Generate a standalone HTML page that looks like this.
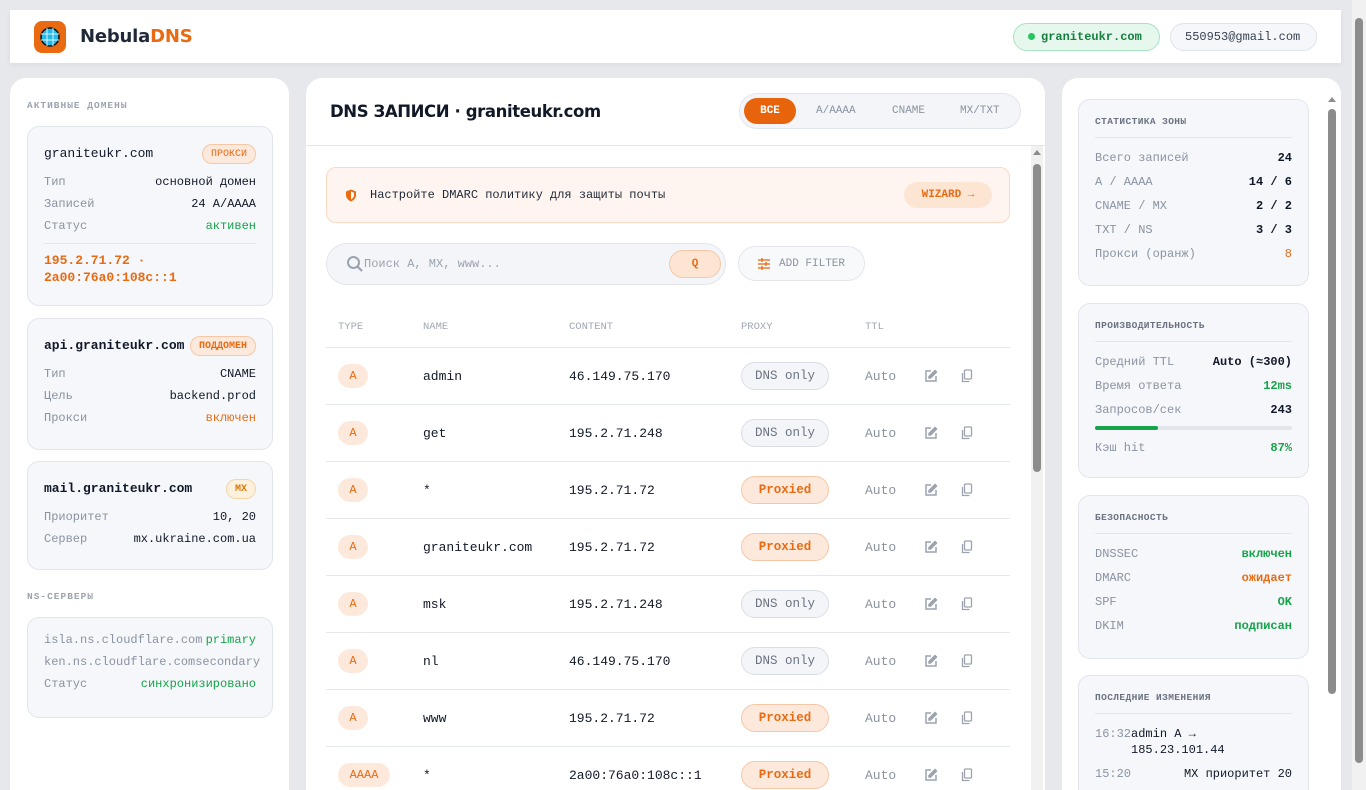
<!DOCTYPE html>
<html><head><meta charset="utf-8">
<style>
*{box-sizing:border-box;margin:0;padding:0}
html,body{width:1366px;height:790px;overflow:hidden}
body{background:#e6e8ec;font-family:"Liberation Mono","DejaVu Sans Mono",monospace;color:#111827;position:relative}
.sans{font-family:"DejaVu Sans","Liberation Sans",sans-serif}
.hdr{position:absolute;left:10px;top:10px;width:1331px;height:53px;background:#fff;box-shadow:0 2px 6px rgba(0,0,0,.05)}
.logo{position:absolute;left:24px;top:11px;width:32px;height:32px;border-radius:8px;background:#ea6a12}
.brand{position:absolute;left:70px;top:16px;font:bold 18px "DejaVu Sans",sans-serif;letter-spacing:-.2px;color:#1f2937}
.brand span{color:#ea6a12}
.pill{position:absolute;top:13px;height:28px;border-radius:14px;font-size:12px;line-height:26px;padding:0 14px;white-space:nowrap}
.pscroll{position:absolute;right:0;top:0;width:14px;height:790px;background:#f1f1f1}
.panel{position:absolute;background:#fff;border-radius:16px;overflow:hidden}
.lab{font-size:9.5px;font-weight:bold;letter-spacing:1px;color:#9ca3af}
.card{background:#f5f7fa;border:1px solid #e2e6ec;border-radius:12px;position:absolute;left:17px;width:246px;padding:0 16px}
.row{display:flex;justify-content:space-between;font-size:12px;height:22px;line-height:22px}
.row .k{color:#8b93a1}
.g{color:#16a34a}.o{color:#ea6a12}
.badge{font-size:10px;border-radius:10px;padding:0 8px;height:20px;line-height:20px;border:1px solid #f6c7a6;background:#fde9dc;color:#ea6a12}
.rr{position:absolute;left:20px;width:684px;height:57px;border-top:1px solid #e5e8ee;font-size:13px}
.rr div{position:absolute;top:0;line-height:58px}
.tb{top:16px!important;line-height:24px!important;height:24px;border-radius:12px;background:#fde9dc;color:#ea6a12;font-size:12px;text-align:center;padding:0 8px}
.px{top:14px!important;line-height:26px!important;height:28px;border-radius:14px;font-size:12.5px;width:88px;text-align:center;border:1px solid #d9dee6;background:#f3f5f8;color:#6b7280}
.px.p{background:#fde9dc;border-color:#f6c7a6;color:#ea6a12;font-weight:bold}
.sc{position:absolute;width:12px;background:#f1f1f1}
.th{position:absolute;left:2px;width:8px;border-radius:4px;background:#8c8c8c}
.rc{position:absolute;left:16px;width:231px;background:#f5f7fa;border:1px solid #e2e6ec;border-radius:12px;padding:0 16px}
.rc .lab{font-size:9.5px;height:38px;line-height:44px;border-bottom:1px solid #e2e6ec;margin-bottom:8px;letter-spacing:.4px;color:#6b7280}
.rc .row{height:24px;line-height:24px}
.rc .row b{color:#111827}
</style></head><body>
<div class="hdr">
 <div class="logo"><svg width="32" height="32" viewBox="0 0 32 32"><circle cx="16" cy="16" r="9" fill="#22b8e8" stroke="#111" stroke-width="1.5"/><g stroke="#dff6ff" stroke-width="1" fill="none"><line x1="7" y1="13" x2="25" y2="13"/><line x1="7" y1="19" x2="25" y2="19"/><line x1="13" y1="7" x2="13" y2="25"/><line x1="19" y1="7" x2="19" y2="25"/></g></svg></div>
 <div class="brand">Nebula<span>DNS</span></div>
 <div class="pill" style="left:1003px;width:147px;background:#e6f7ee;border:1px solid #a7e3c0;color:#15803d;font-weight:bold"><span style="display:inline-block;width:7px;height:7px;border-radius:50%;background:#22c55e;margin-right:6px"></span>graniteukr.com</div>
 <div class="pill" style="left:1160px;width:147px;background:#f5f7fa;border:1px solid #dfe3ea;color:#374151">550953@gmail.com</div>
</div>
<div class="pscroll"><div style="position:absolute;left:3px;top:18px;width:8px;height:745px;border-radius:4px;background:#8c8c8c"></div></div>

<div class="panel" style="left:10px;top:78px;width:279px;height:730px">
 <div class="lab" style="position:absolute;left:17px;top:22px">АКТИВНЫЕ ДОМЕНЫ</div>
 <div class="card" style="top:48px;height:180px">
  <div class="row" style="height:54px;line-height:54px;font-size:13px;align-items:center"><span>graniteukr.com</span><span class="badge">ПРОКСИ</span></div>
  <div class="row" style="margin-top:-10px"><span class="k">Тип</span><span>основной домен</span></div>
  <div class="row"><span class="k">Записей</span><span>24 A/AAAA</span></div>
  <div class="row"><span class="k">Статус</span><span class="g">активен</span></div>
  <div style="border-top:1px solid #e2e6ec;margin-top:6px;padding-top:8px;color:#ea6a12;font-size:13px;font-weight:bold;line-height:17px">195.2.71.72 ·<br>2a00:76a0:108c::1</div>
 </div>
 <div class="card" style="top:240px;height:132px">
  <div class="row" style="height:54px;line-height:54px;font-size:13px;align-items:center;font-weight:bold"><span>api.graniteukr.com</span><span class="badge">ПОДДОМЕН</span></div>
  <div class="row" style="margin-top:-10px"><span class="k">Тип</span><span>CNAME</span></div>
  <div class="row"><span class="k">Цель</span><span>backend.prod</span></div>
  <div class="row"><span class="k">Прокси</span><span class="o">включен</span></div>
 </div>
 <div class="card" style="top:383px;height:109px">
  <div class="row" style="height:54px;line-height:54px;font-size:13px;align-items:center;font-weight:bold"><span>mail.graniteukr.com</span><span class="badge" style="background:#fdf0dc;border-color:#f3d6a8;color:#d97706">MX</span></div>
  <div class="row" style="margin-top:-10px"><span class="k">Приоритет</span><span>10, 20</span></div>
  <div class="row"><span class="k">Сервер</span><span>mx.ukraine.com.ua</span></div>
 </div>
 <div class="lab" style="position:absolute;left:17px;top:513px">NS-СЕРВЕРЫ</div>
 <div class="card" style="top:539px;height:101px;padding-top:11px">
  <div class="row" style="white-space:nowrap"><span class="k">isla.ns.cloudflare.com</span><span class="g">primary</span></div>
  <div class="row" style="white-space:nowrap;width:250px"><span class="k">ken.ns.cloudflare.comsecondary</span></div>
  <div class="row"><span class="k">Статус</span><span class="g">синхронизировано</span></div>
 </div>
</div>

<div class="panel" style="left:306px;top:78px;width:739px;height:730px">
 <div class="sans" style="position:absolute;left:24px;top:24px;font-size:16.5px;font-weight:bold;letter-spacing:-.4px">DNS ЗАПИСИ · graniteukr.com</div>
 <div style="position:absolute;left:433px;top:15px;width:282px;height:36px;border-radius:18px;background:#f3f5f8;border:1px solid #e2e6ec;font-size:11px;color:#8b93a1">
  <div style="position:absolute;left:4px;top:4px;width:52px;height:26px;border-radius:13px;background:#e8640c;color:#fff;text-align:center;line-height:26px;font-weight:bold">ВСЕ</div>
  <div style="position:absolute;left:76px;top:11px">A/AAAA</div>
  <div style="position:absolute;left:152px;top:11px">CNAME</div>
  <div style="position:absolute;left:220px;top:11px">MX/TXT</div>
 </div>
 <div style="position:absolute;left:0;top:67px;width:739px;border-top:1px solid #e2e6ec"></div>
 <div class="sc" style="left:725px;top:68px;height:662px"><div class="th" style="top:18px;height:308px"></div><div style="position:absolute;left:2px;top:4px;border:4px solid transparent;border-bottom:5px solid #8c8c8c;border-top:0"></div></div>
 <div style="position:absolute;left:20px;top:89px;width:684px;height:56px;border-radius:10px;background:#fff5f0;border:1px solid #fbd9c2">
  <svg style="position:absolute;left:18px;top:21px" width="12" height="13" viewBox="0 0 12 13"><path d="M6 .5 11 2.5V6c0 3-2.2 5.3-5 6.5C3.2 11.3 1 9 1 6V2.5Z" fill="#ea6a12"/><path d="M6 2.5 9 3.8V6c0 2-1.3 3.6-3 4.4Z" fill="#fff"/></svg>
  <div style="position:absolute;left:43px;top:20px;font-size:12px;color:#1f2937">Настройте DMARC политику для защиты почты</div>
  <div style="position:absolute;left:577px;top:14px;width:88px;height:26px;border-radius:13px;background:#fde5d4;color:#ea6a12;font-size:11px;font-weight:bold;text-align:center;line-height:26px">WIZARD →</div>
 </div>
 <div style="position:absolute;left:20px;top:165px;width:400px;height:42px;border-radius:21px;background:#f3f5f8;border:1px solid #e2e6ec">
  <svg style="position:absolute;left:19px;top:11px" width="18" height="18" viewBox="0 0 18 18"><circle cx="7.5" cy="7.5" r="5.5" fill="none" stroke="#9ca3af" stroke-width="2"/><line x1="11.5" y1="11.5" x2="16" y2="16" stroke="#9ca3af" stroke-width="2.2"/></svg>
  <div style="position:absolute;left:37px;top:13px;font-size:12px;color:#9ca3af">Поиск A, MX, www...</div>
  <div style="position:absolute;left:342px;top:6px;width:52px;height:28px;border-radius:14px;background:#fde5d4;border:1px solid #f6c7a6;color:#ea6a12;font-size:11px;font-weight:bold;text-align:center;line-height:26px">Q</div>
 </div>
 <div style="position:absolute;left:432px;top:168px;width:127px;height:35px;border-radius:18px;border:1px solid #e2e6ec;background:#f8f9fb;font-size:11px;color:#8b93a1;line-height:35px;padding-left:40px">ADD FILTER
  <svg style="position:absolute;left:19px;top:11px" width="12" height="12" viewBox="0 0 12 12" stroke="#ea6a12" stroke-width="1.3"><line x1="0" y1="2" x2="12" y2="2"/><line x1="0" y1="6" x2="12" y2="6"/><line x1="0" y1="10" x2="12" y2="10"/><line x1="4" y1="0" x2="4" y2="4"/><line x1="8" y1="4" x2="8" y2="8"/><line x1="4" y1="8" x2="4" y2="12"/></svg></div>
 <div style="position:absolute;left:32px;top:243px;font-size:10.5px;color:#a0a7b4">TYPE</div>
 <div style="position:absolute;left:117px;top:243px;font-size:10.5px;color:#a0a7b4">NAME</div>
 <div style="position:absolute;left:263px;top:243px;font-size:10.5px;color:#a0a7b4">CONTENT</div>
 <div style="position:absolute;left:435px;top:243px;font-size:10.5px;color:#a0a7b4">PROXY</div>
 <div style="position:absolute;left:559px;top:243px;font-size:10.5px;color:#a0a7b4">TTL</div>
 <div id="rows"></div>
</div>

<div class="panel" style="left:1062px;top:78px;width:279px;height:730px">
 <div class="sc" style="left:264px;top:6px;height:706px;background:#fff"><div style="position:absolute;left:2px;top:13px;border:4px solid transparent;border-bottom:5px solid #8c8c8c;border-top:0"></div><div class="th" style="top:25px;height:585px"></div></div>
 <div class="rc" style="top:21px;height:187px">
  <div class="lab">СТАТИСТИКА ЗОНЫ</div>
  <div class="row"><span class="k">Всего записей</span><b>24</b></div>
  <div class="row"><span class="k">A / AAAA</span><b>14 / 6</b></div>
  <div class="row"><span class="k">CNAME / MX</span><b>2 / 2</b></div>
  <div class="row"><span class="k">TXT / NS</span><b>3 / 3</b></div>
  <div class="row"><span class="k">Прокси (оранж)</span><span class="o">8</span></div>
 </div>
 <div class="rc" style="top:225px;height:175px">
  <div class="lab">ПРОИЗВОДИТЕЛЬНОСТЬ</div>
  <div class="row"><span class="k">Средний TTL</span><b>Auto (≈300)</b></div>
  <div class="row"><span class="k">Время ответа</span><b style="color:#16a34a">12ms</b></div>
  <div class="row"><span class="k">Запросов/сек</span><b>243</b></div>
  <div style="height:4px;border-radius:2px;background:#e2e6ec;margin:4px 0 6px"><div style="width:63px;height:4px;border-radius:2px;background:#16a34a"></div></div>
  <div class="row"><span class="k">Кэш hit</span><b style="color:#16a34a">87%</b></div>
 </div>
 <div class="rc" style="top:417px;height:164px">
  <div class="lab">БЕЗОПАСНОСТЬ</div>
  <div class="row"><span class="k">DNSSEC</span><b style="color:#16a34a">включен</b></div>
  <div class="row"><span class="k">DMARC</span><b style="color:#ea6a12">ожидает</b></div>
  <div class="row"><span class="k">SPF</span><b style="color:#16a34a">OK</b></div>
  <div class="row"><span class="k">DKIM</span><b style="color:#16a34a">подписан</b></div>
 </div>
 <div class="rc" style="top:597px;height:140px">
  <div class="lab">ПОСЛЕДНИЕ ИЗМЕНЕНИЯ</div>
  <div style="font-size:12px;line-height:16px;display:flex;margin-top:12px"><span class="k" style="color:#8b93a1">16:32</span><span>admin A →<br>185.23.101.44</span></div>
  <div class="row" style="margin-top:4px"><span class="k">15:20</span><span>MX приоритет 20</span></div>
 </div>
</div>

<script>
var d=[["A","admin","46.149.75.170",0],["A","get","195.2.71.248",0],["A","*","195.2.71.72",1],["A","graniteukr.com","195.2.71.72",1],["A","msk","195.2.71.248",0],["A","nl","46.149.75.170",0],["A","www","195.2.71.72",1],["AAAA","*","2a00:76a0:108c::1",1]];
var edit='<svg width="14" height="14" viewBox="0 0 14 14" fill="none" stroke="#9ca3af" stroke-width="1.5"><path d="M7 2H2v10h10V7"/><path d="M11 1.5l1.5 1.5-6 6H5V7.5z" fill="#9ca3af"/></svg>';
var copy='<svg width="14" height="14" viewBox="0 0 14 14" fill="none" stroke="#9ca3af" stroke-width="1.3"><rect x="4.5" y="1" width="7" height="9" rx="1"/><path d="M2.5 4v8.5h7"/></svg>';
var h='';
d.forEach(function(r,i){
h+='<div class="rr" style="top:'+(269+i*57)+'px"><div class="tb" style="left:12px;'+(r[0]=="A"?'width:30px;padding:0':'width:52px')+'">'+r[0]+'</div><div style="left:97px">'+r[1]+'</div><div style="left:243px">'+r[2]+'</div><div class="px'+(r[3]?' p':'')+'" style="left:415px">'+(r[3]?'Proxied':'DNS only')+'</div><div style="left:539px;color:#8b93a1">Auto</div><div style="left:598px;top:21px;line-height:14px">'+edit+'</div><div style="left:634px;top:21px;line-height:14px">'+copy+'</div></div>';});
document.getElementById('rows').innerHTML=h;
</script>
</body></html>
